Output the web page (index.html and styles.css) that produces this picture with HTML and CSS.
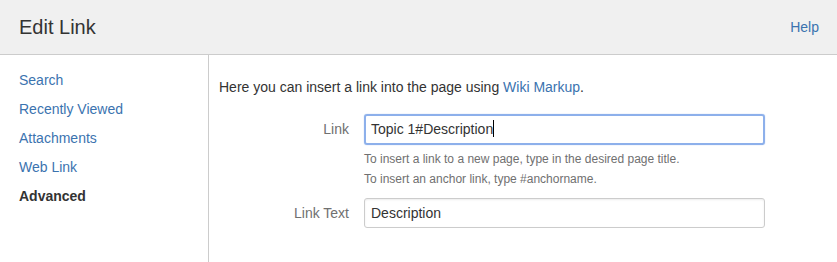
FILE: index.html
```html
<!DOCTYPE html>
<html lang="en">
<head>
    <meta charset="UTF-8">
    <title>Edit Link</title>
    <link rel="stylesheet" href="styles.css">
</head>
<body>
    <div class="dialog">
        <div class="header">
            <h2>Edit Link</h2>
            <a href="#" class="help">Help</a>
        </div>
        <div class="content">
            <ul class="menu">
                <li><a href="#">Search</a></li>
                <li><a href="#">Recently Viewed</a></li>
                <li><a href="#">Attachments</a></li>
                <li><a href="#">Web Link</a></li>
                <li class="active">Advanced</li>
            </ul>
            <div class="panel">
                <p class="intro">Here you can insert a link into the page using <a href="#">Wiki Markup</a>.</p>
                <div class="row">
                    <label>Link</label>
                    <div class="field-wrap">
                        <div class="field focused">Topic 1#Description<span class="caret"></span></div>
                        <div class="hint">To insert a link to a new page, type in the desired page title.</div>
                        <div class="hint">To insert an anchor link, type #anchorname.</div>
                    </div>
                </div>
                <div class="row">
                    <label>Link Text</label>
                    <div class="field-wrap">
                        <div class="field">Description</div>
                    </div>
                </div>
            </div>
        </div>
    </div>
</body>
</html>
```

FILE: styles.css
```css
body {
    margin: 0;
    font-family: 'Liberation Sans', Arial, sans-serif;
    font-size: 14px;
    color: #333;
    background: #fff;
}
a {
    color: #3b73af;
    text-decoration: none;
}
.header {
    height: 54px;
    background: #f0f0f0;
    border-bottom: 1px solid #ccc;
    display: flex;
    align-items: center;
    justify-content: space-between;
    padding: 0 18px 0 19px;
}
.header h2 {
    margin: 0;
    font-size: 20px;
    font-weight: normal;
    color: #333;
}
.help {
    font-size: 14px;
}
.content {
    display: flex;
    height: 207px;
}
.menu {
    list-style: none;
    margin: 0;
    padding: 11px 0 0 19px;
    width: 189px;
    border-right: 1px solid #ccc;
}
.menu li {
    height: 29px;
    line-height: 29px;
}
.menu .active {
    font-weight: bold;
    color: #333;
}
.panel {
    padding: 0 0 0 10px;
}
.intro {
    margin: 22px 0 17px;
    line-height: 20px;
}
.row {
    display: flex;
    margin-bottom: 9px;
}
.row label {
    width: 130px;
    margin-right: 15px;
    text-align: right;
    color: #707070;
    line-height: 30px;
}
.field-wrap {
    width: 401px;
}
.field {
    box-sizing: border-box;
    height: 30px;
    line-height: 28px;
    padding: 0 6px;
    border: 1px solid #ccc;
    border-radius: 3px;
    box-shadow: inset 0 1px 2px rgba(0, 0, 0, 0.08);
    color: #333;
}
.field.focused {
    height: 31px;
    border: 2px solid #8db0eb;
    line-height: 27px;
    padding: 0 5px;
    box-shadow: 0 0 1px #8db0eb;
}
.caret {
    display: inline-block;
    width: 1px;
    height: 17px;
    background: #000;
    vertical-align: -3px;
}
.hint {
    font-size: 12px;
    color: #707070;
    line-height: 20px;
}
.field + .hint {
    margin-top: 4px;
}
```
